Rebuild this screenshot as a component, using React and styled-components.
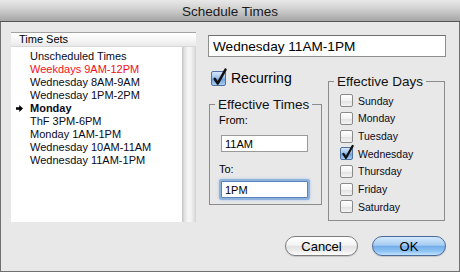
import styled, { createGlobalStyle } from 'styled-components';

const GlobalStyle = createGlobalStyle`
  html, body {
    margin: 0;
    padding: 0;
    background: #e8e8e8;
  }
  body {
    font-family: "Liberation Sans", Arial, sans-serif;
    color: #000;
  }
`;

const timeSets = [
  { label: 'Unscheduled Times' },
  { label: 'Weekdays 9AM-12PM', red: true },
  { label: 'Wednesday 8AM-9AM' },
  { label: 'Wednesday 1PM-2PM' },
  { label: 'Monday', bold: true, current: true },
  { label: 'ThF 3PM-6PM' },
  { label: 'Monday 1AM-1PM' },
  { label: 'Wednesday 10AM-11AM' },
  { label: 'Wednesday 11AM-1PM' },
];

const days = [
  { label: 'Sunday' },
  { label: 'Monday' },
  { label: 'Tuesday' },
  { label: 'Wednesday', checked: true },
  { label: 'Thursday' },
  { label: 'Friday' },
  { label: 'Saturday' },
];

function CheckMark({ size }) {
  return (
    <CheckSvg width={size} height={size} viewBox="0 0 14 14">
      <path
        d="M2.6 7.4 L5.4 11.6 L12.6 -1.2"
        fill="none"
        stroke="#111"
        strokeWidth="2.4"
        strokeLinecap="round"
        strokeLinejoin="round"
      />
    </CheckSvg>
  );
}

function Arrow() {
  return (
    <svg width="7" height="7" viewBox="0 0 7 7">
      <path d="M0 2.3h3.3V0L7 3.5 3.3 7V4.7H0z" fill="#000" />
    </svg>
  );
}

export default function App() {
  return (
    <>
      <GlobalStyle />
      <Window>
        <TitleBar>Schedule Times</TitleBar>
        <Main>
          <ListPanel>
            <ListHeader>Time Sets</ListHeader>
            <ListBody>
              <ListItems>
                {timeSets.map((s) => (
                  <ListItem key={s.label} $red={s.red} $bold={s.bold}>
                    <Marker>{s.current && <Arrow />}</Marker>
                    {s.label}
                  </ListItem>
                ))}
              </ListItems>
              <ScrollTrack />
            </ListBody>
          </ListPanel>

          <RightColumn>
            <NameField defaultValue="Wednesday 11AM-1PM" />
            <Options>
              <LeftOptions>
                <RecurringRow>
                  <BigBox>
                    <CheckMark size={15} />
                  </BigBox>
                  Recurring
                </RecurringRow>
                <TimesGroup>
                  <GroupTitle>Effective Times</GroupTitle>
                  <TimesInner>
                    <FieldLabel $top="1px" $bottom="8px">From:</FieldLabel>
                    <TimeInput defaultValue="11AM" />
                    <FieldLabel $top="11px" $bottom="5px">To:</FieldLabel>
                    <TimeInput defaultValue="1PM" $focused />
                  </TimesInner>
                </TimesGroup>
              </LeftOptions>

              <DaysGroup>
                <GroupTitle>Effective Days</GroupTitle>
                <DaysInner>
                  {days.map((d) => (
                    <DayRow key={d.label}>
                      <SmallBox $checked={d.checked}>
                        {d.checked && <CheckMark size={13} />}
                      </SmallBox>
                      {d.label}
                    </DayRow>
                  ))}
                </DaysInner>
              </DaysGroup>
            </Options>
          </RightColumn>
        </Main>
        <Footer>
          <PillButton>Cancel</PillButton>
          <PillButton $primary>OK</PillButton>
        </Footer>
      </Window>
    </>
  );
}

const Window = styled.div`
  width: 460px;
  height: 272px;
  box-sizing: border-box;
  border: 1px solid #707070;
  border-top: none;
  background: #e8e8e8;
  display: flex;
  flex-direction: column;
`;

const TitleBar = styled.div`
  height: 22px;
  margin: 0 -1px;
  border-bottom: 1px solid #555;
  background: linear-gradient(to bottom, #e8e8e8 0%, #d2d2d2 40%, #b4b4b4 80%, #a6a6a6 100%);
  display: flex;
  align-items: center;
  justify-content: center;
  font-size: 13.5px;
  color: #1a1a1a;
  padding-top: 1px;
  box-sizing: border-box;
`;

const Main = styled.div`
  display: flex;
  padding: 10px 0 0 10px;
`;

const ListPanel = styled.div`
  width: 185px;
  height: 190px;
  display: flex;
  flex-direction: column;
`;

const ListHeader = styled.div`
  height: 15px;
  box-sizing: border-box;
  border-top: 1px solid #a2a2a2;
  border-bottom: 1px solid #d8d8d8;
  background: linear-gradient(to bottom, #ffffff, #f4f4f4 60%, #e9e9e9);
  font-size: 11px;
  line-height: 13px;
  padding-left: 8px;
`;

const ListBody = styled.div`
  flex: 1;
  display: flex;
`;

const ListItems = styled.div`
  flex: 1;
  background: #fff;
  padding-top: 3px;
`;

const ListItem = styled.div`
  display: flex;
  align-items: center;
  height: 13px;
  font-size: 11px;
  line-height: 13px;
  white-space: nowrap;
  color: ${(p) => (p.$red ? '#f0101a' : '#0a0a1a')};
  font-weight: ${(p) => (p.$bold ? 'bold' : 'normal')};
`;

const Marker = styled.span`
  width: 19px;
  padding-left: 5px;
  box-sizing: border-box;
  display: flex;
  align-items: center;
`;

const ScrollTrack = styled.div`
  width: 14px;
  background: linear-gradient(
    to right,
    #c4c4c4 0%,
    #e4e4e4 20%,
    #f6f6f6 45%,
    #f2f2f2 65%,
    #dedede 90%,
    #cfcfcf 100%
  );
`;

const RightColumn = styled.div`
  margin-left: 12px;
  width: 238px;
  display: flex;
  flex-direction: column;
`;

const NameField = styled.input`
  margin-top: 3px;
  height: 22px;
  box-sizing: border-box;
  border: 1px solid #8e8e8e;
  border-top-color: #6e6e6e;
  background: #fff;
  font-family: inherit;
  font-size: 13.6px;
  padding: 0 4px;
  outline: none;
  color: #000;
`;

const Options = styled.div`
  display: flex;
  margin-top: 12px;
  gap: 6px;
`;

const LeftOptions = styled.div`
  width: 113px;
  margin-left: 1px;
  display: flex;
  flex-direction: column;
`;

const RecurringRow = styled.div`
  height: 18px;
  display: flex;
  align-items: center;
  gap: 5px;
  font-size: 14px;
  padding-left: 2px;
`;

const BigBox = styled.span`
  width: 15px;
  height: 15px;
  box-sizing: border-box;
  border: 1px solid #4f6f9c;
  border-radius: 2px;
  background: linear-gradient(to bottom, #d6e6f8 0%, #9cc1ec 45%, #6ea0de 55%, #a9cdf3 100%);
  display: flex;
  align-items: center;
  justify-content: center;
`;

const SmallBox = styled.span`
  width: 13px;
  height: 13px;
  box-sizing: border-box;
  border: 1px solid ${(p) => (p.$checked ? '#4f6f9c' : '#8a8a8a')};
  border-radius: 2px;
  background: ${(p) =>
    p.$checked
      ? 'linear-gradient(to bottom, #d6e6f8 0%, #9cc1ec 45%, #6ea0de 55%, #a9cdf3 100%)'
      : 'linear-gradient(to bottom, #ffffff 0%, #f2f2f2 50%, #e2e2e2 55%, #f4f4f4 100%)'};
  display: flex;
  align-items: center;
  justify-content: center;
  flex-shrink: 0;
`;

const CheckSvg = styled.svg`
  overflow: visible;
  margin-left: 1px;
`;

const Group = styled.fieldset`
  margin: 0;
  padding: 0;
  border: 1px solid #8c8c8c;
  min-width: 0;
  box-sizing: border-box;
`;

const TimesGroup = styled(Group)`
  margin-top: 9px;
  height: 109px;
`;

const DaysGroup = styled(Group)`
  margin-top: 4px;
  width: 117px;
  height: 148px;
`;

const GroupTitle = styled.legend`
  margin-left: 5px;
  padding: 0 3px;
  font-size: 13.5px;
  line-height: 17px;
  white-space: nowrap;
  color: #111;
`;

const TimesInner = styled.div`
  display: flex;
  flex-direction: column;
  padding: 0 0 0 9px;
`;

const FieldLabel = styled.div`
  font-size: 11px;
  line-height: 13px;
  margin-top: ${(p) => p.$top};
  margin-bottom: ${(p) => p.$bottom};
`;

const TimeInput = styled.input`
  width: 87px;
  height: 17px;
  margin-left: 2px;
  box-sizing: border-box;
  border: 1px solid ${(p) => (p.$focused ? '#5b82b8' : '#9a9a9a')};
  background: #fff;
  font-family: inherit;
  font-size: 11px;
  padding: 0 3px;
  color: #000;
  outline: none;
  box-shadow: ${(p) => (p.$focused ? '0 0 0 2px #8eb2de, 0 0 3px 2px #a9c6ea' : 'none')};
  border-radius: ${(p) => (p.$focused ? '1px' : '0')};
`;

const DaysInner = styled.div`
  padding: 2px 0 0 11px;
`;

const DayRow = styled.div`
  height: 17.67px;
  display: flex;
  align-items: center;
  gap: 5px;
  font-size: 10.5px;
  color: #0a0a1a;
`;

const Footer = styled.div`
  display: flex;
  justify-content: flex-end;
  gap: 14px;
  margin-top: 14px;
  padding-right: 13px;
`;

const PillButton = styled.button`
  width: ${(p) => (p.$primary ? '74px' : '73px')};
  height: 20px;
  border-radius: 10px;
  box-sizing: border-box;
  font-family: inherit;
  font-size: 13px;
  padding: 0;
  color: #000;
  border: 1px solid ${(p) => (p.$primary ? '#4a6a98' : '#7e7e7e')};
  background: ${(p) =>
    p.$primary
      ? 'linear-gradient(to bottom, #d4e8fb 0%, #a7cdf3 45%, #74aeea 52%, #8fc4f4 80%, #c3e3ff 100%)'
      : 'linear-gradient(to bottom, #ffffff 0%, #f4f4f4 45%, #e2e2e2 52%, #eeeeee 80%, #ffffff 100%)'};
  box-shadow: 0 1px 1px rgba(0, 0, 0, 0.15);
`;
